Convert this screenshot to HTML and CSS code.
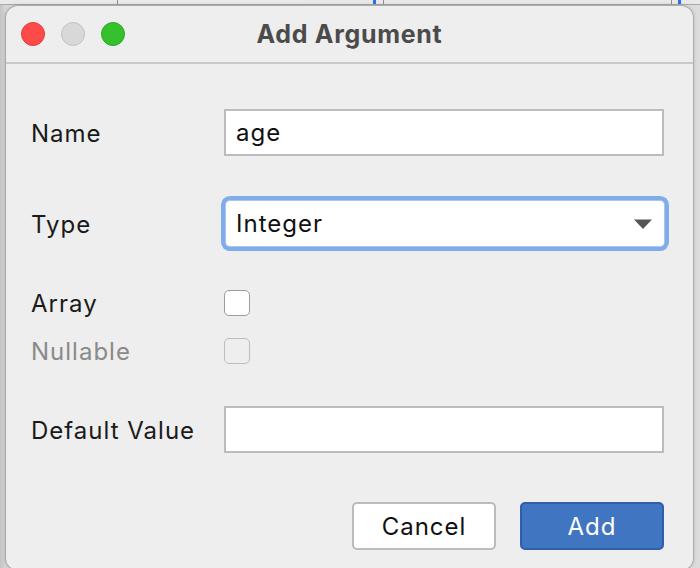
FILE: index.html
```html
<!DOCTYPE html>
<html>
<head>
<meta charset="utf-8">
<link rel="stylesheet" href="styles.css">
</head>
<body>
<div class="desktop">
  <div class="backwin">
    <span class="vline gray l1"></span>
    <span class="vline blue l2"></span>
    <span class="vline gray l3"></span>
    <span class="vline gray l4"></span>
    <span class="vline blue l5"></span>
  </div>
  <div class="window">
    <div class="titlebar">
      <div class="lights">
        <span class="light red"></span>
        <span class="light gray"></span>
        <span class="light green"></span>
      </div>
      <div class="title">Add Argument</div>
    </div>
    <div class="form">
      <div class="row row-name">
        <label class="label">Name</label>
        <div class="field">age</div>
      </div>
      <div class="row row-type">
        <label class="label">Type</label>
        <div class="select">
          <span>Integer</span>
          <svg class="caret" width="18" height="10" viewBox="0 0 18 10"><path d="M0 0.5 H18 L9 10 Z" fill="#555"/></svg>
        </div>
      </div>
      <div class="row row-array">
        <label class="label">Array</label>
        <span class="check"></span>
      </div>
      <div class="row row-null">
        <label class="label disabled">Nullable</label>
        <span class="check check-disabled"></span>
      </div>
      <div class="row row-default">
        <label class="label">Default Value</label>
        <div class="field"></div>
      </div>
      <div class="buttons">
        <button class="btn btn-cancel">Cancel</button>
        <button class="btn btn-add">Add</button>
      </div>
    </div>
  </div>
</div>
</body>
</html>
```

FILE: styles.css
```css
html, body {
  margin: 0;
  padding: 0;
}
body {
  background: #d6d6d6;
  font-family: Inter, "Noto Sans", sans-serif;
}
.desktop {
  position: relative;
  width: 700px;
  height: 568px;
  overflow: hidden;
  background: linear-gradient(90deg, #c4c4c4 0px, #d8d8d8 6px, #dcdcdc 100%);
}
.backwin {
  position: absolute;
  left: 0;
  top: -20px;
  width: 700px;
  height: 24px;
  background: #e9e9e9;
  border-bottom: 1px solid #a9a9a9;
}
.vline {
  position: absolute;
  top: 0;
  bottom: 0;
  width: 1px;
  background: #8f8f8f;
}
.vline.blue {
  width: 3px;
  background: #2a6ff0;
}
.l1 { left: 117px; }
.l2 { left: 373px; }
.l3 { left: 383px; }
.l4 { left: 671px; }
.l5 { left: 678px; }

.window {
  position: absolute;
  left: 6px;
  top: 6px;
  width: 687px;
  height: 564px;
  background: #eeeeee;
  border-radius: 12px;
  box-shadow: 0 0 0 1px rgba(0,0,0,0.12), 0 0 4px rgba(0,0,0,0.25);
  overflow: hidden;
}
.titlebar {
  position: relative;
  height: 56px;
  border-bottom: 2px solid #c8c8c8;
  display: flex;
  align-items: center;
  justify-content: center;
}
.lights {
  position: absolute;
  left: 15px;
  top: 16px;
  display: flex;
  gap: 16px;
}
.light {
  width: 22px;
  height: 22px;
  border-radius: 50%;
  border: 1px solid;
}
.light.red { background: #ff4a4a; border-color: #e33b3b; }
.light.gray { background: #d8d8d8; border-color: #c2c2c2; }
.light.green { background: #35c12d; border-color: #27a822; }
.title {
  font-size: 25px;
  font-weight: 700;
  color: #4b4b4b;
  letter-spacing: 0.7px;
}

.form {
  padding: 0 29px 0 25px;
  display: flex;
  flex-direction: column;
}
.row {
  display: flex;
  align-items: center;
}
.label {
  width: 193px;
  font-size: 24px;
  line-height: 24px;
  padding-top: 3px;
  letter-spacing: 1px;
  color: #1a1a1a;
}
.label.disabled {
  color: #8a8a8a;
}
.row-name { margin-top: 45px; }
.row-type { margin-top: 45px; }
.row-array { margin-top: 43px; }
.row-null { margin-top: 21px; }
.row-default { margin-top: 42px; }

.field {
  flex: 1;
  height: 43px;
  border: 2px solid #bcbcbc;
  background: #ffffff;
  box-sizing: content-box;
  padding: 0 10px;
  display: flex;
  align-items: center;
  font-size: 24px;
  letter-spacing: 1px;
  color: #111;
}
.select {
  flex: 1;
  margin-left: 2px;
  height: 45px;
  background: #ffffff;
  border-radius: 4px;
  box-shadow: 0 0 0 1px #a9c6ef, 0 0 0 5px #80aceb;
  display: flex;
  align-items: center;
  justify-content: space-between;
  padding: 0 12px 0 10px;
  font-size: 24px;
  letter-spacing: 1px;
  color: #111;
}
.caret {
  display: block;
}
.check {
  width: 24px;
  height: 24px;
  border: 1.5px solid #9c9c9c;
  border-radius: 5px;
  background: #ffffff;
}
.check-disabled {
  border-color: #bdbdbd;
  background: #eeeeee;
}

.buttons {
  margin-top: 49px;
  display: flex;
  justify-content: flex-end;
  gap: 24px;
}
.btn {
  width: 144px;
  height: 48px;
  border-radius: 5px;
  font-family: Inter, "Noto Sans", sans-serif;
  font-size: 24px;
  letter-spacing: 1px;
  padding: 0;
}
.btn-cancel {
  background: #ffffff;
  border: 2px solid #bcbcbc;
  color: #111;
}
.btn-add {
  background: #3f75c1;
  border: 2px solid #2f5fa6;
  color: #ffffff;
}
```
